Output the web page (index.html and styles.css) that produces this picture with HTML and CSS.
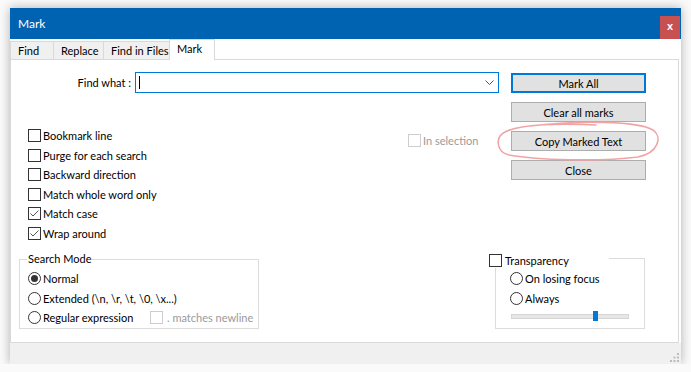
FILE: index.html
```html
<!DOCTYPE html>
<html lang="en">
<head>
    <meta charset="UTF-8">
    <title>Mark</title>
    <link rel="stylesheet" href="styles.css">
</head>
<body>
    <div class="window">
        <div class="titlebar">
            <span class="title">Mark</span>
            <button class="close">x</button>
        </div>

        <div class="tabs">
            <div class="tab tab-find">Find</div>
            <div class="tab tab-replace">Replace</div>
            <div class="tab tab-files">Find in Files</div>
            <div class="tab tab-mark active">Mark</div>
        </div>

        <div class="panel">
            <div class="top">
                <div class="main">
                    <div class="find-row">
                        <label class="find-label">Find what :</label>
                        <div class="combo">
                            <span class="caret"></span>
                            <svg class="chevron" width="9" height="5" viewBox="0 0 9 5"><polyline points="0.5,0.5 4.5,4.5 8.5,0.5" fill="none" stroke="#555" stroke-width="1"/></svg>
                        </div>
                    </div>

                    <div class="options">
                        <ul class="checks">
                            <li class="check"><span class="box"></span>Bookmark line</li>
                            <li class="check"><span class="box"></span>Purge for each search</li>
                            <li class="check"><span class="box"></span>Backward direction</li>
                            <li class="check"><span class="box"></span>Match whole word only</li>
                            <li class="check checked"><span class="box"><svg width="11" height="11" viewBox="0 0 11 11"><polyline points="1.5,5.5 4,8 9.5,2.5" fill="none" stroke="#555" stroke-width="1"/></svg></span>Match case</li>
                            <li class="check checked"><span class="box"><svg width="11" height="11" viewBox="0 0 11 11"><polyline points="1.5,5.5 4,8 9.5,2.5" fill="none" stroke="#555" stroke-width="1"/></svg></span>Wrap around</li>
                        </ul>
                        <div class="check disabled in-selection"><span class="box"></span>In selection</div>
                    </div>
                </div>

                <div class="buttons">
                    <button class="btn default">Mark All</button>
                    <button class="btn">Clear all marks</button>
                    <div class="highlight">
                        <button class="btn">Copy Marked Text</button>
                        <!-- hand drawn marker loop -->
                        <svg class="scribble" width="164" height="40" viewBox="0 0 164 40">
                            <path d="M34 4 C82 -2, 142 -1, 157 8 C167 15, 162 31, 142 35 C102 40, 42 38, 13 33 C0 30, -1 15, 9 10 C24 2, 64 1, 100 3" fill="none" stroke="#f1a4a4" stroke-width="1.6" stroke-linecap="round"/>
                        </svg>
                    </div>
                    <button class="btn">Close</button>
                </div>
            </div>

            <div class="bottom">
                <div class="group search-mode">
                    <div class="group-title">Search Mode</div>
                    <div class="radio on"><span class="ring"></span>Normal</div>
                    <div class="radio"><span class="ring"></span>Extended (\n, \r, \t, \0, \x...)</div>
                    <div class="radio">
                        <span class="ring"></span><span class="regex-label">Regular expression</span>
                        <span class="check disabled newline"><span class="box"></span>. matches newline</span>
                    </div>
                </div>

                <div class="group transparency">
                    <div class="group-head"><span class="box"></span>Transparency</div>
                    <div class="radio"><span class="ring"></span>On losing focus</div>
                    <div class="radio"><span class="ring"></span>Always</div>
                    <div class="slider"><span class="thumb"></span></div>
                </div>
            </div>
        </div>

        <div class="statusbar">
            <svg class="grip" width="9" height="9" viewBox="0 0 9 9">
                <rect x="7" y="0" width="2" height="2" fill="#bcbcbc"/>
                <rect x="3.5" y="3.5" width="2" height="2" fill="#bcbcbc"/>
                <rect x="7" y="3.5" width="2" height="2" fill="#bcbcbc"/>
                <rect x="0" y="7" width="2" height="2" fill="#bcbcbc"/>
                <rect x="3.5" y="7" width="2" height="2" fill="#bcbcbc"/>
                <rect x="7" y="7" width="2" height="2" fill="#bcbcbc"/>
            </svg>
        </div>
    </div>
</body>
</html>
```

FILE: styles.css
```css
* {
    box-sizing: border-box;
}

body {
    margin: 0;
    background: #fafafa;
    font-family: Lato, "Liberation Sans", sans-serif;
    font-size: 11px;
    color: #000;
    white-space: nowrap;
}

.window {
    margin: 8px 0 0 10px;
    width: 671px;
    height: 356px;
    background: #fff;
    display: flex;
    flex-direction: column;
    box-shadow: 0 0 10px rgba(0, 0, 0, 0.3);
}

/* title bar */
.titlebar {
    height: 31px;
    flex: none;
    background: #0063b1;
    color: #fff;
    display: flex;
    align-items: center;
    justify-content: space-between;
    padding-left: 8px;
    font-size: 12px;
}

.close {
    align-self: flex-end;
    width: 20px;
    height: 23px;
    margin-right: 1px;
    padding: 0 0 3px;
    border: none;
    background: #c75050;
    color: #fff;
    font: bold 11px "Liberation Sans", sans-serif;
}

/* tabs */
.tabs {
    height: 20px;
    flex: none;
    display: flex;
    align-items: flex-end;
    position: relative;
    z-index: 1;
}

.tab {
    height: 18px;
    margin-right: -1px;
    padding: 1px 0 0 7px;
    border: 1px solid #d9d9d9;
    border-bottom: none;
    background: #f0f0f0;
    line-height: 16px;
}

.tab-find { width: 44px; }
.tab-replace { width: 51px; }
.tab-files { width: 67px; }
.tab-mark { width: 46px; }

.tab.active {
    height: 21px;
    margin-bottom: -1px;
    padding-top: 1px;
    background: #fff;
}

/* main panel */
.panel {
    flex: 1;
    margin-right: 2px;
    border: 1px solid #d9d9d9;
}

.top {
    display: flex;
}

.main {
    width: 500px;
}

.find-row {
    display: flex;
    align-items: center;
    height: 21px;
    margin-top: 12px;
}

.find-label {
    width: 120px;
    text-align: right;
}

.combo {
    width: 364px;
    height: 21px;
    margin-left: 4px;
    padding: 0 4px 0 3px;
    border: 1px solid #0078d7;
    display: flex;
    align-items: center;
    justify-content: space-between;
}

.caret {
    width: 1px;
    height: 13px;
    background: #000;
}

.options {
    display: flex;
    margin-top: 33px;
}

.checks {
    list-style: none;
    margin: 0;
    padding: 0 0 0 17px;
    width: 397px;
}

.check {
    display: flex;
    align-items: center;
    height: 19.5px;
}

.box {
    width: 13px;
    height: 13px;
    flex: none;
    margin-right: 2px;
    border: 1px solid #333;
    background: #fff;
    display: flex;
}

.disabled {
    color: #9a9a9a;
}

.disabled .box {
    border-color: #cdcdcd;
}

.in-selection {
    margin-top: 5px;
}

/* buttons */
.buttons {
    width: 135px;
    margin-top: 13px;
    display: flex;
    flex-direction: column;
    gap: 9px;
}

.btn {
    width: 100%;
    height: 20px;
    padding: 0;
    border: 1px solid #adadad;
    background: #e1e1e1;
    color: #000;
    font: inherit;
}

.btn.default {
    border: 2px solid #0078d7;
}

.highlight {
    position: relative;
}

.scribble {
    position: absolute;
    left: -15px;
    top: -9px;
    overflow: visible;
    pointer-events: none;
}

/* group boxes */
.bottom {
    display: flex;
    align-items: flex-start;
    margin-top: 16px;
    padding-left: 8px;
}

.group {
    position: relative;
    border: 1px solid #dcdcdc;
}

.search-mode {
    width: 240px;
    height: 70px;
    padding: 9px 0 0 8px;
}

.group-title {
    position: absolute;
    top: -9px;
    left: 7px;
    padding: 0 1px;
    background: #fff;
    line-height: 16px;
}

.radio {
    display: flex;
    align-items: center;
    height: 19.5px;
}

.ring {
    width: 13px;
    height: 13px;
    flex: none;
    margin-right: 2px;
    border: 1px solid #333;
    border-radius: 50%;
    background: #fff;
    display: flex;
    align-items: center;
    justify-content: center;
}

.radio.on .ring::after {
    content: "";
    width: 7px;
    height: 7px;
    border-radius: 50%;
    background: #333;
}

.regex-label {
    width: 107px;
}

.newline .box {
    margin-right: 4px;
}

.transparency {
    width: 150px;
    height: 71px;
    margin-left: 236px;
    margin-top: -1px;
    padding: 10px 0 0 14px;
}

.group-head {
    position: absolute;
    top: -7px;
    left: -7px;
    width: 120px;
    height: 16px;
    background: #fff;
    display: flex;
    align-items: center;
}

.group-head .box {
    margin-right: 3px;
}

.slider {
    position: relative;
    width: 118px;
    height: 5px;
    margin: 6px 0 0 1px;
    border: 1px solid #d6d6d6;
    background: #e7e7e7;
}

.thumb {
    position: absolute;
    left: 81px;
    top: -4px;
    width: 5px;
    height: 10px;
    background: #0078d7;
}

/* status bar */
.statusbar {
    height: 21px;
    flex: none;
    background: #f0f0f0;
    display: flex;
    justify-content: flex-end;
    align-items: flex-end;
    padding: 0 2px 2px 0;
}
```
